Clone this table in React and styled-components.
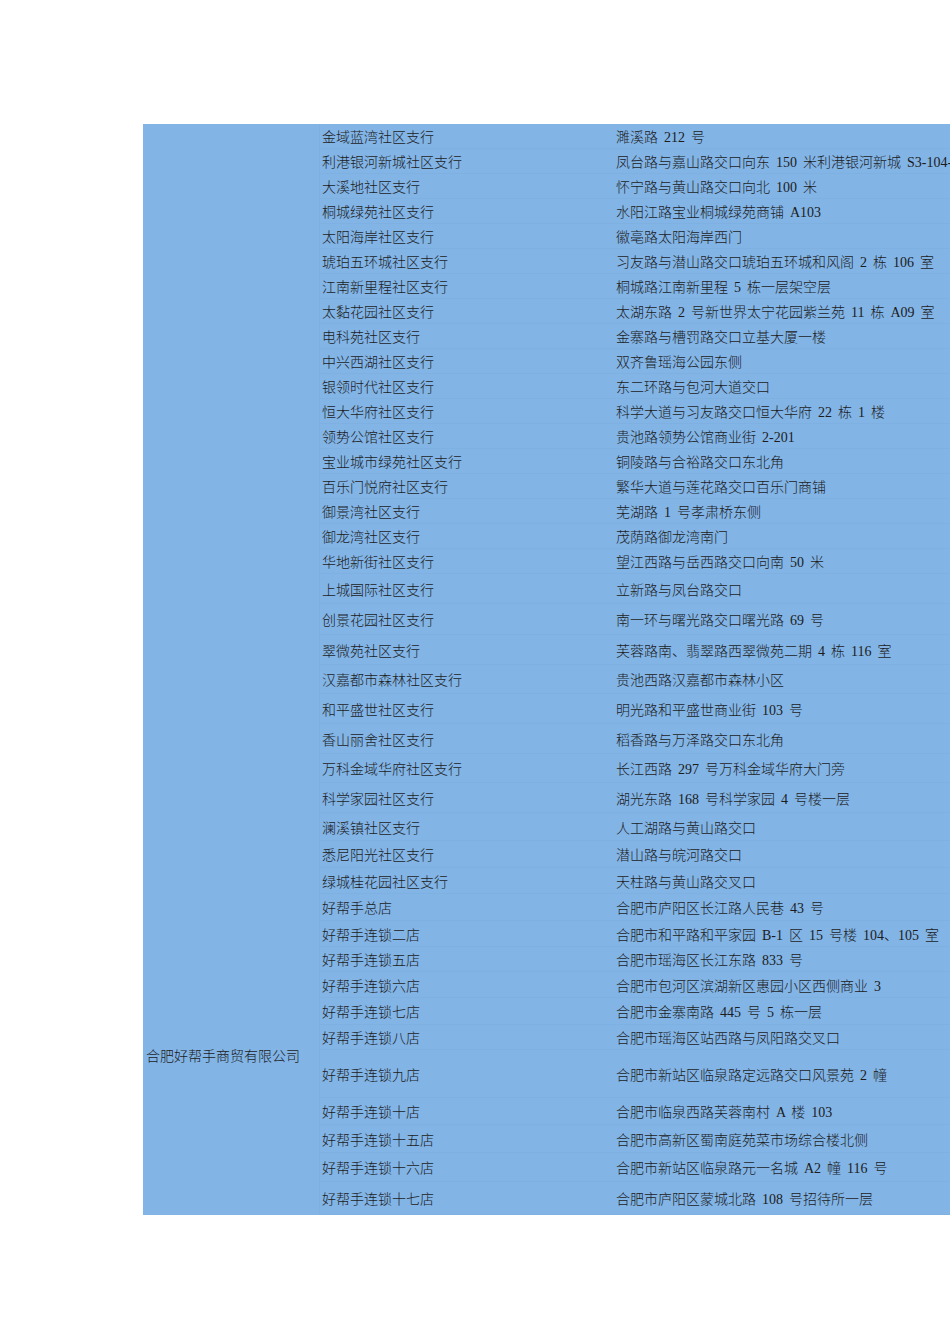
import React from 'react'
import styled, { createGlobalStyle } from 'styled-components'

const GlobalStyle = createGlobalStyle`
    html, body {
        margin: 0;
        padding: 0;
        background: #ffffff;
        overflow: hidden;
    }
`

const groups = [
    {
        company: '',
        rows: [
            ['金域蓝湾社区支行', '濉溪路 212 号', 25],
            ['利港银河新城社区支行', '凤台路与嘉山路交口向东 150 米利港银河新城 S3-104-105', 25],
            ['大溪地社区支行', '怀宁路与黄山路交口向北 100 米', 25],
            ['桐城绿苑社区支行', '水阳江路宝业桐城绿苑商铺 A103', 25],
            ['太阳海岸社区支行', '徽亳路太阳海岸西门', 25],
            ['琥珀五环城社区支行', '习友路与潜山路交口琥珀五环城和风阁 2 栋 106 室', 25],
            ['江南新里程社区支行', '桐城路江南新里程 5 栋一层架空层', 25],
            ['太黏花园社区支行', '太湖东路 2 号新世界太宁花园紫兰苑 11 栋 A09 室', 25],
            ['电科苑社区支行', '金寨路与槽罚路交口立基大厦一楼', 25],
            ['中兴西湖社区支行', '双齐鲁瑶海公园东侧', 25],
            ['银领时代社区支行', '东二环路与包河大道交口', 25],
            ['恒大华府社区支行', '科学大道与习友路交口恒大华府 22 栋 1 楼', 25],
            ['领势公馆社区支行', '贵池路领势公馆商业街 2-201', 25],
            ['宝业城市绿苑社区支行', '铜陵路与合裕路交口东北角', 25],
            ['百乐门悦府社区支行', '繁华大道与莲花路交口百乐门商铺', 25],
            ['御景湾社区支行', '芜湖路 1 号孝肃桥东侧', 25],
            ['御龙湾社区支行', '茂荫路御龙湾南门', 25],
            ['华地新街社区支行', '望江西路与岳西路交口向南 50 米', 25],
            ['上城国际社区支行', '立新路与凤台路交口', 30],
            ['创景花园社区支行', '南一环与曙光路交口曙光路 69 号', 31],
            ['翠微苑社区支行', '芙蓉路南、翡翠路西翠微苑二期 4 栋 116 室', 30],
            ['汉嘉都市森林社区支行', '贵池西路汉嘉都市森林小区', 29],
            ['和平盛世社区支行', '明光路和平盛世商业街 103 号', 30],
            ['香山丽舍社区支行', '稻香路与万泽路交口东北角', 30],
            ['万科金域华府社区支行', '长江西路 297 号万科金域华府大门旁', 29],
            ['科学家园社区支行', '湖光东路 168 号科学家园 4 号楼一层', 30],
            ['澜溪镇社区支行', '人工湖路与黄山路交口', 28],
            ['悉尼阳光社区支行', '潜山路与皖河路交口', 27],
            ['绿城桂花园社区支行', '天柱路与黄山路交叉口', 26],
        ],
    },
    {
        company: '合肥好帮手商贸有限公司',
        rows: [
            ['好帮手总店', '合肥市庐阳区长江路人民巷 43 号', 27],
            ['好帮手连锁二店', '合肥市和平路和平家园 B-1 区 15 号楼 104、105 室', 26],
            ['好帮手连锁五店', '合肥市瑶海区长江东路 833 号', 25],
            ['好帮手连锁六店', '合肥市包河区滨湖新区惠园小区西侧商业 3', 26],
            ['好帮手连锁七店', '合肥市金寨南路 445 号 5 栋一层', 27],
            ['好帮手连锁八店', '合肥市瑶海区站西路与凤阳路交叉口', 25],
            ['好帮手连锁九店', '合肥市新站区临泉路定远路交口风景苑 2 幢', 48],
            ['好帮手连锁十店', '合肥市临泉西路芙蓉南村 A 楼 103', 27],
            ['好帮手连锁十五店', '合肥市高新区蜀南庭苑菜市场综合楼北侧', 28],
            ['好帮手连锁十六店', '合肥市新站区临泉路元一名城 A2 幢 116 号', 29],
            ['好帮手连锁十七店', '合肥市庐阳区蒙城北路 108 号招待所一层', 33],
        ],
    },
]

const Page = styled.div`
    padding: 124px 0 129px 143px;
    font-family: "Liberation Serif", "Noto Sans CJK SC", serif;
    font-size: 14px;
    font-weight: 300;
    word-spacing: 2.5px;
    color: #1c1c1c;
`

const Sheet = styled.div`
    display: grid;
    grid-template-columns: 176px 294px 337px;
    width: 807px;
    background: #82b4e6;
`

const CompanyCell = styled.div`
    grid-column: 1;
    grid-row: ${props => props.start} / span ${props => props.span};
    display: flex;
    align-items: center;
    padding-left: 3px;
    white-space: nowrap;
`

const Cell = styled.div`
    grid-column: ${props => props.col};
    grid-row: ${props => props.row};
    height: ${props => props.h}px;
    display: flex;
    align-items: center;
    padding-left: ${props => props.col === 2 ? 2 : 3}px;
    box-sizing: border-box;
    white-space: nowrap;
    overflow: hidden;
    border-left: ${props => props.col === 2 ? '1px solid #7eb0e2' : 'none'};
    border-bottom: 1px solid #7eb0e2;
`

function App() {
    let rowIndex = 0
    return (
        <Page>
            <GlobalStyle />
            <Sheet>
                {
                    groups.map((group, g) => {
                        const start = rowIndex + 1
                        const items = [
                            <CompanyCell key={`c${g}`} start={start} span={group.rows.length}>
                                {group.company}
                            </CompanyCell>
                        ]
                        group.rows.forEach(([name, address, h]) => {
                            rowIndex += 1
                            items.push(
                                <Cell key={`n${rowIndex}`} col={2} row={rowIndex} h={h}>{name}</Cell>,
                                <Cell key={`a${rowIndex}`} col={3} row={rowIndex} h={h}>{address}</Cell>
                            )
                        })
                        return items
                    })
                }
            </Sheet>
        </Page>
    )
}

export default App
